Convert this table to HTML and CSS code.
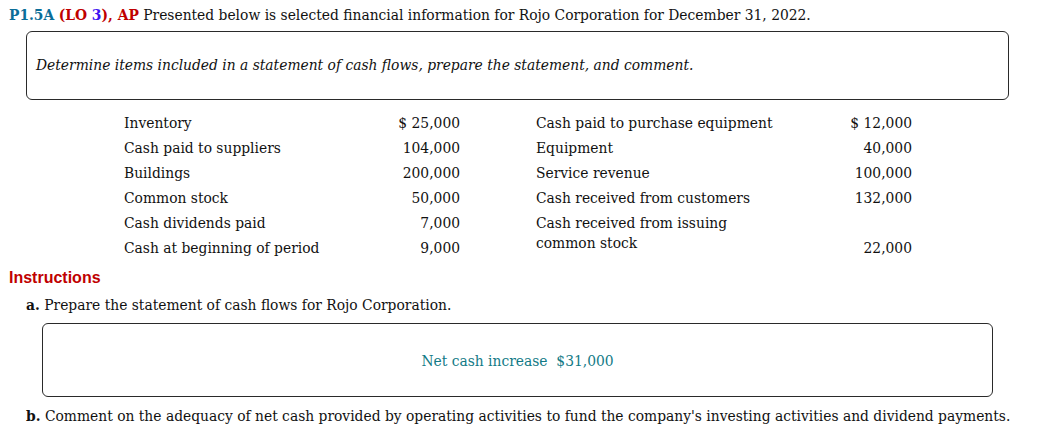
FILE: index.html
```html
<!DOCTYPE html>
<html lang="en">
<head>
<meta charset="utf-8">
<title>P1.5A</title>
<link rel="stylesheet" href="styles.css">
</head>
<body>
<div class="page">
  <p class="heading"><b class="pid">P1.5A</b> <b class="lo">(LO <span class="lonum">3</span>), AP</b> Presented below is selected financial information for Rojo Corporation for December 31, 2022.</p>

  <div class="box objective">
    <p><i>Determine items included in a statement of cash flows, prepare the statement, and comment.</i></p>
  </div>

  <div class="data">
    <div class="col col-left">
      <div class="row"><span class="label">Inventory</span><span class="amt">$ 25,000</span></div>
      <div class="row"><span class="label">Cash paid to suppliers</span><span class="amt">104,000</span></div>
      <div class="row"><span class="label">Buildings</span><span class="amt">200,000</span></div>
      <div class="row"><span class="label">Common stock</span><span class="amt">50,000</span></div>
      <div class="row"><span class="label">Cash dividends paid</span><span class="amt">7,000</span></div>
      <div class="row"><span class="label">Cash at beginning of period</span><span class="amt">9,000</span></div>
    </div>
    <div class="col col-right">
      <div class="row"><span class="label">Cash paid to purchase equipment</span><span class="amt">$ 12,000</span></div>
      <div class="row"><span class="label">Equipment</span><span class="amt">40,000</span></div>
      <div class="row"><span class="label">Service revenue</span><span class="amt">100,000</span></div>
      <div class="row"><span class="label">Cash received from customers</span><span class="amt">132,000</span></div>
      <div class="row row-tall"><span class="label label-wrap">Cash received from issuing common stock</span><span class="amt">22,000</span></div>
    </div>
  </div>

  <h3 class="instructions">Instructions</h3>
  <p class="step"><b>a.</b> Prepare the statement of cash flows for Rojo Corporation.</p>
  <div class="box answer">
    <p class="answer-text">Net cash increase&nbsp; $31,000</p>
  </div>
  <p class="step step-b"><b>b.</b> Comment on the adequacy of net cash provided by operating activities to fund the company's investing activities and dividend payments.</p>
</div>
</body>
</html>
```

FILE: styles.css
```css
html, body {
  margin: 0;
  padding: 0;
  background: #ffffff;
}

.page {
  font-family: "DejaVu Serif", "Liberation Serif", serif;
  font-size: 13.85px;
  color: #111111;
  padding: 6px 0 0 9px;
}

p {
  margin: 0;
}

.heading {
  line-height: 18px;
  height: 18px;
}

.pid {
  color: #0b6e99;
}

.lo {
  color: #c00000;
}

.lonum {
  color: #3d12f0;
}

.box {
  border: 1px solid #2a2a2a;
  border-radius: 6px;
  box-sizing: border-box;
}

.objective {
  margin: 7px 0 0 17px;
  width: 983px;
  height: 69px;
  display: flex;
  align-items: center;
  padding: 0 0 1px 9px;
}

.data {
  display: flex;
  margin: 11px 0 0 115px;
}

.col {
  display: flex;
  flex-direction: column;
}

.col-left {
  width: 336px;
}

.col-right {
  width: 376px;
  margin-left: 76px;
}

.row {
  display: flex;
  justify-content: space-between;
  align-items: flex-end;
  line-height: 25px;
  height: 25px;
}

.row-tall {
  height: 50px;
}

.label-wrap {
  width: 220px;
  line-height: 20px;
  align-self: flex-start;
  padding-top: 2px;
}

.instructions {
  font-family: "Liberation Sans", Arial, sans-serif;
  color: #c00000;
  font-size: 16px;
  font-weight: bold;
  line-height: 18px;
  margin: 8px 0 0 0;
}

.step {
  margin: 9px 0 0 17px;
  line-height: 18px;
}

.answer {
  margin: 9px 0 0 33px;
  width: 951px;
  height: 74px;
  display: flex;
  align-items: center;
  justify-content: center;
  padding-top: 2px;
}

.answer-text {
  color: #127a86;
}

.step-b {
  margin-top: 10px;
}
```
